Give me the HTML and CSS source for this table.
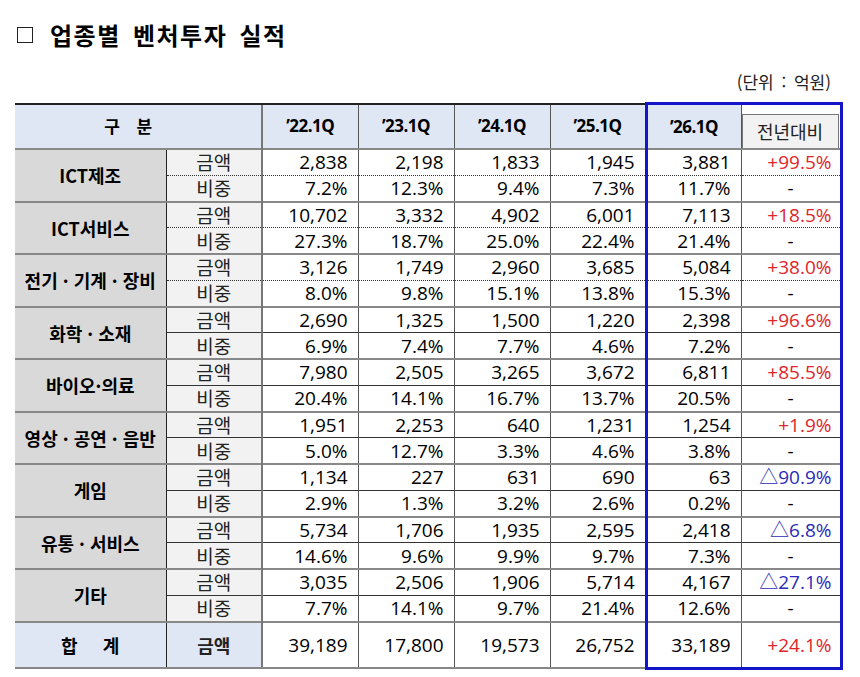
FILE: index.html
```html
<!DOCTYPE html>
<html lang="ko">
<head>
<meta charset="utf-8">
<link rel="stylesheet" href="styles.css">
</head>
<body>
<div class="page">
  <h1 class="title"><span class="box"></span>업종별 벤처투자 실적</h1>
  <div class="unit">(단위 : 억원)</div>
  <table class="tbl">
    <colgroup>
      <col class="c-cat"><col class="c-sub"><col class="c-d"><col class="c-d"><col class="c-d"><col class="c-d"><col class="c-d26"><col class="c-yoy">
    </colgroup>
    <thead>
      <tr class="hrow">
        <th colspan="2" class="h-gubun">구&nbsp;&nbsp;&nbsp;&nbsp;분</th>
        <th class="h-q sep-left">’22.1Q</th>
        <th class="h-q">’23.1Q</th>
        <th class="h-q">’24.1Q</th>
        <th class="h-q">’25.1Q</th>
        <th class="h-q blue-l">’26.1Q</th>
        <th class="h-yoy blue-r"><div class="yoy-box">전년대비</div></th>
      </tr>
    </thead>
    <tbody class="grp dot">
      <tr><th rowspan="2" class="cat">ICT제조</th><td class="sub">금액</td><td class="sep-left">2,838</td><td>2,198</td><td>1,833</td><td>1,945</td><td class="blue-l">3,881</td><td class="yoy blue-r up">+99.5%</td></tr>
      <tr><td class="sub">비중</td><td class="sep-left">7.2%</td><td>12.3%</td><td>9.4%</td><td>7.3%</td><td class="blue-l">11.7%</td><td class="yoy blue-r">-</td></tr>
    </tbody>
    <tbody class="grp dot">
      <tr><th rowspan="2" class="cat">ICT서비스</th><td class="sub">금액</td><td class="sep-left">10,702</td><td>3,332</td><td>4,902</td><td>6,001</td><td class="blue-l">7,113</td><td class="yoy blue-r up">+18.5%</td></tr>
      <tr><td class="sub">비중</td><td class="sep-left">27.3%</td><td>18.7%</td><td>25.0%</td><td>22.4%</td><td class="blue-l">21.4%</td><td class="yoy blue-r">-</td></tr>
    </tbody>
    <tbody class="grp dot">
      <tr><th rowspan="2" class="cat">전기 · 기계 · 장비</th><td class="sub">금액</td><td class="sep-left">3,126</td><td>1,749</td><td>2,960</td><td>3,685</td><td class="blue-l">5,084</td><td class="yoy blue-r up">+38.0%</td></tr>
      <tr><td class="sub">비중</td><td class="sep-left">8.0%</td><td>9.8%</td><td>15.1%</td><td>13.8%</td><td class="blue-l">15.3%</td><td class="yoy blue-r">-</td></tr>
    </tbody>
    <tbody class="grp">
      <tr><th rowspan="2" class="cat">화학 · 소재</th><td class="sub">금액</td><td class="sep-left">2,690</td><td>1,325</td><td>1,500</td><td>1,220</td><td class="blue-l">2,398</td><td class="yoy blue-r up">+96.6%</td></tr>
      <tr><td class="sub">비중</td><td class="sep-left">6.9%</td><td>7.4%</td><td>7.7%</td><td>4.6%</td><td class="blue-l">7.2%</td><td class="yoy blue-r">-</td></tr>
    </tbody>
    <tbody class="grp">
      <tr><th rowspan="2" class="cat">바이오·의료</th><td class="sub">금액</td><td class="sep-left">7,980</td><td>2,505</td><td>3,265</td><td>3,672</td><td class="blue-l">6,811</td><td class="yoy blue-r up">+85.5%</td></tr>
      <tr><td class="sub">비중</td><td class="sep-left">20.4%</td><td>14.1%</td><td>16.7%</td><td>13.7%</td><td class="blue-l">20.5%</td><td class="yoy blue-r">-</td></tr>
    </tbody>
    <tbody class="grp">
      <tr><th rowspan="2" class="cat">영상 · 공연 · 음반</th><td class="sub">금액</td><td class="sep-left">1,951</td><td>2,253</td><td>640</td><td>1,231</td><td class="blue-l">1,254</td><td class="yoy blue-r up">+1.9%</td></tr>
      <tr><td class="sub">비중</td><td class="sep-left">5.0%</td><td>12.7%</td><td>3.3%</td><td>4.6%</td><td class="blue-l">3.8%</td><td class="yoy blue-r">-</td></tr>
    </tbody>
    <tbody class="grp">
      <tr><th rowspan="2" class="cat">게임</th><td class="sub">금액</td><td class="sep-left">1,134</td><td>227</td><td>631</td><td>690</td><td class="blue-l">63</td><td class="yoy blue-r down">△90.9%</td></tr>
      <tr><td class="sub">비중</td><td class="sep-left">2.9%</td><td>1.3%</td><td>3.2%</td><td>2.6%</td><td class="blue-l">0.2%</td><td class="yoy blue-r">-</td></tr>
    </tbody>
    <tbody class="grp">
      <tr><th rowspan="2" class="cat">유통 · 서비스</th><td class="sub">금액</td><td class="sep-left">5,734</td><td>1,706</td><td>1,935</td><td>2,595</td><td class="blue-l">2,418</td><td class="yoy blue-r down">△6.8%</td></tr>
      <tr><td class="sub">비중</td><td class="sep-left">14.6%</td><td>9.6%</td><td>9.9%</td><td>9.7%</td><td class="blue-l">7.3%</td><td class="yoy blue-r">-</td></tr>
    </tbody>
    <tbody class="grp">
      <tr><th rowspan="2" class="cat">기타</th><td class="sub">금액</td><td class="sep-left">3,035</td><td>2,506</td><td>1,906</td><td>5,714</td><td class="blue-l">4,167</td><td class="yoy blue-r down">△27.1%</td></tr>
      <tr><td class="sub">비중</td><td class="sep-left">7.7%</td><td>14.1%</td><td>9.7%</td><td>21.4%</td><td class="blue-l">12.6%</td><td class="yoy blue-r">-</td></tr>
    </tbody>
    <tbody class="grp total">
      <tr><th class="cat tot-cat">합&nbsp;&nbsp;&nbsp;&nbsp;&nbsp;계</th><td class="sub tot-sub">금액</td><td class="sep-left">39,189</td><td>17,800</td><td>19,573</td><td>26,752</td><td class="blue-l blue-b">33,189</td><td class="yoy blue-r blue-b up">+24.1%</td></tr>
    </tbody>
  </table>
</div>
</body>
</html>
```
FILE: styles.css
```css
html, body {
  margin: 0;
  padding: 0;
  background: #ffffff;
}
body {
  font-family: "Open Sans", "Noto Sans CJK KR", sans-serif;
  color: #000;
}
.page {
  padding: 18px 20px 0 15px;
}
.title {
  margin: 0 0 0 2px;
  font-family: "Noto Sans CJK KR", sans-serif;
  font-weight: 700;
  font-size: 24px;
  line-height: 34px;
  letter-spacing: 1.5px;
  word-spacing: 4px;
  display: flex;
  align-items: center;
}
.box {
  display: inline-block;
  width: 14px;
  height: 14px;
  border: 1.5px solid #222;
  margin-right: 17px;
}
.unit {
  text-align: right;
  font-family: "Noto Sans CJK KR", sans-serif;
  font-size: 17px;
  line-height: 20px;
  margin-top: 20px;
  margin-right: 9px;
  margin-bottom: 10px;
  color: #222;
  word-spacing: 3px;
}
.tbl {
  border-collapse: collapse;
  table-layout: fixed;
  width: 826px;
}
.c-cat { width: 151px; }
.c-sub { width: 96px; }
.c-d { width: 96px; }
.c-d26 { width: 95px; }
.c-yoy { width: 100px; }

.tbl td, .tbl th {
  padding: 0;
  line-height: 20px;
}
.tbl td {
  text-align: right;
  padding-right: 10px;
  font-size: 19px;
  height: 24.75px;
  border-left: 1.5px solid #555;
}
.hrow th {
  height: 38px;
  background: #dfe7f5;
  border-top: 2px solid #222;
  border-bottom: 1.5px solid #222;
  font-size: 17px;
  font-weight: 700;
  letter-spacing: -0.5px;
}
.h-q {
  border-left: 1.5px solid #555;
}
.h-gubun {
  font-family: "Noto Sans CJK KR", sans-serif;
  font-size: 18px;
  padding-right: 20px !important;
}
.hrow th.h-yoy {
  background: #ffffff;
  padding: 5px 1px 0 0;
  vertical-align: bottom;
  border-left: 1.5px solid #555;
}
.yoy-box {
  background: #f2f2f2;
  border: 1px solid #777;
  border-bottom: none;
  height: 33px;
  line-height: 33px;
  font-family: "Noto Sans CJK KR", sans-serif;
  font-weight: 400;
  font-size: 18px;
  color: #222;
  letter-spacing: 0;
}
.cat {
  background: #d9d9d9;
  font-family: "Noto Sans CJK KR", sans-serif;
  font-size: 18px;
  font-weight: 700;
  border-right: 1px solid #222;
  letter-spacing: 0;
}
.tbl td.sub {
  background: #f2f2f2;
  text-align: center;
  padding: 0;
  font-family: "Noto Sans CJK KR", sans-serif;
  font-size: 19px;
  border-left: 1px solid #222;
  color: #222;
}
.tbl td.sep-left, .tbl th.sep-left {
  border-left: 2px solid #777;
}
.grp tr:first-child td, .grp tr:first-child th {
  border-top: 2px solid #888;
}
.grp tr + tr td {
  border-top: 1px solid #333;
}
.grp.dot tr + tr td {
  border-top: 1px dotted #333;
}
.yoy {
  padding-right: 8px !important;
}
.tbl td.yoy:not(.up):not(.down) {
  text-align: center;
  padding-right: 0 !important;
}
.up { color: #e0262b; }
.down { color: #2b2bb8; }

.tbl .total td, .tbl .total th {
  height: 44px;
}
.total .tot-cat {
  background: #dfe7f5;
  font-size: 18px;
  border-bottom: 2px solid #888;
}
.tbl .total td.tot-sub {
  background: #dfe7f5;
  font-weight: 700;
  font-size: 18px;
  border-left: 1px solid #222;
}
.total td {
  border-bottom: 2px solid #888;
}
.tbl .blue-l {
  border-left: 3px solid #1515c8;
}
.tbl .blue-r {
  border-right: 3px solid #1515c8;
}
.hrow th.blue-l, .hrow th.blue-r {
  border-top: 3px solid #1515c8;
}
.tbl td.blue-b {
  border-bottom: 3px solid #1515c8;
}
```
